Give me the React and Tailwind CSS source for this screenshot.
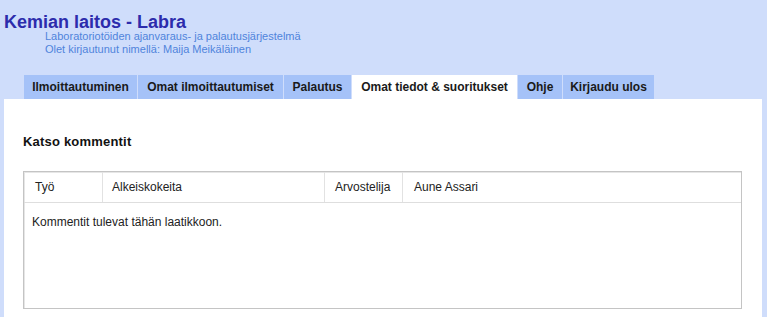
export default function App() {
  const tabs = [
    { label: 'Ilmoittautuminen', w: 'w-[113px]' },
    { label: 'Omat ilmoittautumiset', w: 'w-[145px]' },
    { label: 'Palautus', w: 'w-[67px]' },
    { label: 'Omat tiedot & suoritukset', w: 'w-[165px]', active: true },
    { label: 'Ohje', w: 'w-[44px]' },
    { label: 'Kirjaudu ulos', w: 'w-[91px]' },
  ];

  return (
    <div className="min-h-screen h-[317px] overflow-hidden bg-[#cfddfb] font-['Liberation_Sans',Arial,sans-serif] flex flex-col">
      <div className="pl-[4px] pt-[14px]">
        <h1 className="text-[18px] leading-[16px] font-bold text-[#2c2cac]">Kemian laitos - Labra</h1>
        <div className="ml-[41px] text-[11px] leading-[13px] text-[#4f84dc]">
          <p>Laboratoriotöiden ajanvaraus- ja palautusjärjestelmä</p>
          <p>Olet kirjautunut nimellä: Maija Meikäläinen</p>
        </div>
      </div>

      <div className="flex gap-[1px] ml-[24px] mt-[19px] h-[24px]">
        {tabs.map((t) => (
          <div
            key={t.label}
            className={`${t.w} flex items-center justify-center text-[12px] font-bold text-[#1a1a1a] ${
              t.active ? 'bg-white' : 'bg-[#a5c2f8]'
            }`}
          >
            {t.label}
          </div>
        ))}
      </div>

      <div className="flex-1 bg-white ml-[4px] mr-[5px] pl-[19px] pr-[20px] pt-[35px]">
        <h2 className="text-[13px] leading-[16px] font-bold text-[#111] tracking-[0.2px]">Katso kommentit</h2>

        <div className="mt-[21px] border border-[#c4c4c4] shadow-[inset_1px_1px_0_#e6e6e6] text-[12px] text-[#222]">
          <div className="grid grid-cols-[79px_222px_78px_1fr] h-[31px] border-b border-[#dedede]">
            <div className="pl-[11px] flex items-center border-r border-[#e2e2e2]">Työ</div>
            <div className="pl-[9px] flex items-center border-r border-[#e2e2e2]">Alkeiskokeita</div>
            <div className="pl-[10px] flex items-center border-r border-[#e2e2e2]">Arvostelija</div>
            <div className="pl-[11px] flex items-center">Aune Assari</div>
          </div>
          <div className="h-[105px] pl-[8px] pt-[10px]">Kommentit tulevat tähän laatikkoon.</div>
        </div>
      </div>
    </div>
  );
}
